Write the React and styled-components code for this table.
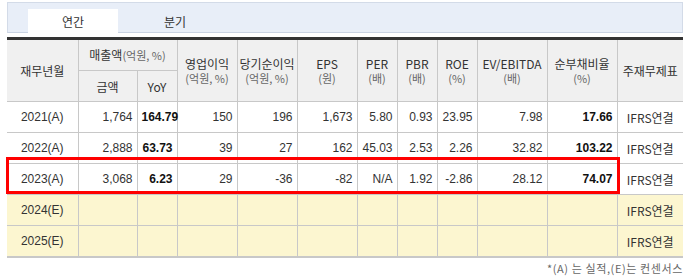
import React from "react";
import styled, { createGlobalStyle } from "styled-components";

const GlobalStyle = createGlobalStyle`
    body {
        margin: 0;
        background: #fff;
        font-family: "Liberation Sans", "Noto Sans CJK KR", sans-serif;
        color: #333;
    }
`;

const Page = styled.div`
    width: 676px;
    padding: 2px 0 0 7px;
`;

const TabBar = styled.div`
    height: 31px;
    box-sizing: border-box;
    background: #e8eef8;
    border: 1px solid #d3dbe8;
    border-bottom-color: #c9d3e3;
    display: flex;
    align-items: flex-end;
    padding-left: 20px;
`;

const Tab = styled.div`
    width: 90px;
    height: 24px;
    display: flex;
    align-items: center;
    justify-content: center;
    font-family: "Noto Sans CJK KR", sans-serif;
    font-size: 12px;
    color: #333;
    background: ${p => (p.active ? "#fff" : "transparent")};
    margin-bottom: -1px;
    margin-right: ${p => (p.active ? "12px" : "0")};
`;

const TableWrap = styled.div`
    position: relative;
    margin-top: 4px;
`;

const Table = styled.table`
    width: 676px;
    border-collapse: collapse;
    table-layout: fixed;
    border-top: 3px solid #333;
    border-bottom: 2px solid #c8c8c8;
    font-size: 12px;
`;

const Th = styled.th`
    background: #f0f0f0;
    font-family: "Noto Sans CJK KR", sans-serif;
    font-weight: normal;
    font-size: 12px;
    color: #333;
    line-height: 15px;
    height: 30px;
    padding: 0;
    border: 1px solid #c8c8c8;
    border-top: none;
    text-align: center;
    &:first-child { border-left: none; }
    &:last-child { border-right: none; }
`;

const Sub = styled.span`
    display: ${p => (p.inline ? "inline" : "block")};
    font-size: 11px;
    line-height: 15px;
    color: #666;
`;

const Row = styled.tr`
    background: ${p => (p.estimate ? "#fcf6d0" : "#fff")};
`;

const Td = styled.td`
    height: 30px;
    padding: 0 4px;
    border: 1px solid #c8c8c8;
    text-align: ${p => p.align || "right"};
    font-weight: ${p => (p.bold ? "bold" : "normal")};
    color: ${p => (p.bold ? "#111" : "#333")};
    font-family: ${p => (p.korean ? "\"Noto Sans CJK KR\", sans-serif" : "\"Liberation Sans\", sans-serif")};
    white-space: nowrap;
    &:first-child { border-left: none; }
    &:last-child { border-right: none; }
`;

const Highlight = styled.div`
    position: absolute;
    left: -1px;
    top: 120px;
    width: 608px;
    height: 31px;
    border: 3px solid #f00;
    pointer-events: none;
`;

const Note = styled.div`
    text-align: right;
    font-family: "Noto Sans CJK KR", sans-serif;
    font-size: 11px;
    letter-spacing: 0.6px;
    color: #666;
    margin-top: 2px;
`;

const widths = [71, 59, 40, 60, 60, 60, 40, 40, 40, 70, 70, 66];

const rows = [
    { y: "2021(A)", v: ["1,764", "164.79", "150", "196", "1,673", "5.80", "0.93", "23.95", "7.98", "17.66"] },
    { y: "2022(A)", v: ["2,888", "63.73", "39", "27", "162", "45.03", "2.53", "2.26", "32.82", "103.22"] },
    { y: "2023(A)", v: ["3,068", "6.23", "29", "-36", "-82", "N/A", "1.92", "-2.86", "28.12", "74.07"] },
    { y: "2024(E)", v: Array(10).fill(""), estimate: true },
    { y: "2025(E)", v: Array(10).fill(""), estimate: true }
];

const boldCols = [1, 9];

const App = () => {
    return (
        <Page>
            <GlobalStyle />
            <TabBar>
                <Tab active>연간</Tab>
                <Tab>분기</Tab>
            </TabBar>
            <TableWrap>
                <Table>
                    <colgroup>
                        {widths.map((w, i) => (
                            <col key={i} style={{ width: w }} />
                        ))}
                    </colgroup>
                    <thead>
                        <tr>
                            <Th rowSpan={2}>재무년월</Th>
                            <Th colSpan={2}>
                                매출액<Sub inline>(억원, %)</Sub>
                            </Th>
                            <Th rowSpan={2}>
                                영업이익<Sub>(억원, %)</Sub>
                            </Th>
                            <Th rowSpan={2}>
                                당기순이익<Sub>(억원, %)</Sub>
                            </Th>
                            <Th rowSpan={2}>
                                EPS<Sub>(원)</Sub>
                            </Th>
                            <Th rowSpan={2}>
                                PER<Sub>(배)</Sub>
                            </Th>
                            <Th rowSpan={2}>
                                PBR<Sub>(배)</Sub>
                            </Th>
                            <Th rowSpan={2}>
                                ROE<Sub>(%)</Sub>
                            </Th>
                            <Th rowSpan={2}>
                                EV/EBITDA<Sub>(배)</Sub>
                            </Th>
                            <Th rowSpan={2}>
                                순부채비율<Sub>(%)</Sub>
                            </Th>
                            <Th rowSpan={2}>주재무제표</Th>
                        </tr>
                        <tr>
                            <Th>금액</Th>
                            <Th>YoY</Th>
                        </tr>
                    </thead>
                    <tbody>
                        {rows.map(r => (
                            <Row key={r.y} estimate={r.estimate}>
                                <Td align="center">{r.y}</Td>
                                {r.v.map((v, i) => (
                                    <Td key={i} bold={boldCols.includes(i)}>
                                        {v}
                                    </Td>
                                ))}
                                <Td align="center" korean>
                                    IFRS연결
                                </Td>
                            </Row>
                        ))}
                    </tbody>
                </Table>
                <Highlight />
            </TableWrap>
            <Note>*(A) 는 실적,(E)는 컨센서스</Note>
        </Page>
    );
};

export default App;
